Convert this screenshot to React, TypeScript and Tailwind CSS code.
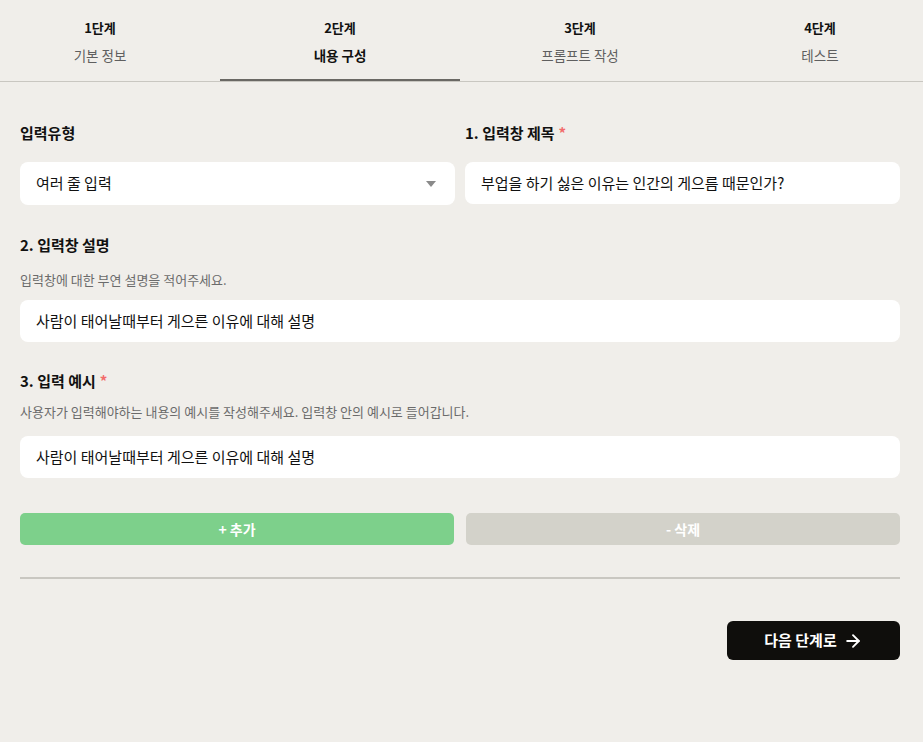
import React from "react";
import { ArrowRight } from "lucide-react";

const steps = [
  { num: "1단계", label: "기본 정보" },
  { num: "2단계", label: "내용 구성" },
  { num: "3단계", label: "프롬프트 작성" },
  { num: "4단계", label: "테스트" },
];

function Label({ text, required }: { text: string; required?: boolean }) {
  return (
    <div className="text-[15px] leading-5 font-semibold text-[#111]">
      {text}
      {required && <span className="ml-1 text-[#f26b6b]">*</span>}
    </div>
  );
}

function TextBox({ value }: { value: string }) {
  return (
    <div className="h-[42px] bg-white rounded-lg px-4 flex items-center text-[15px] text-[#111]">
      {value}
    </div>
  );
}

export default function App() {
  const active = 1;
  return (
    <div
      className="min-h-[742px] bg-[#f0eeea] overflow-hidden"
      style={{ fontFamily: '"Noto Sans CJK KR", "Noto Sans", sans-serif' }}
    >
      <div className="border-b border-[#c9c7c1] overflow-hidden">
        <div className="flex -ml-[20px] w-[960px]">
          {steps.map((s, i) => (
            <div key={s.num} className="w-[240px] h-[81px] relative flex flex-col items-center pt-[18px]">
              <div className="text-[13px] leading-5 font-bold text-[#111]">{s.num}</div>
              <div
                className={
                  i === active
                    ? "mt-[7px] text-[13.5px] leading-5 font-semibold text-[#111]"
                    : "mt-[7px] text-[13.5px] leading-5 text-[#5f5f5f]"
                }
              >
                {s.label}
              </div>
              {i === active && <div className="absolute left-0 right-0 bottom-0 h-[2px] bg-[#6a6864]" />}
            </div>
          ))}
        </div>
      </div>

      <div className="pl-5 pr-[23px] pt-[41px]">
        <div className="grid grid-cols-2 gap-[10px]">
          <div>
            <Label text="입력유형" />
            <div className="mt-[19px] h-[43px] bg-white rounded-lg pl-4 pr-4 flex items-center justify-between text-[15px] text-[#111]">
              <span>여러 줄 입력</span>
              <svg width="10" height="6" viewBox="0 0 10 6" className="mr-[3px]">
                <path d="M0 0 L10 0 L5 6 Z" fill="#8a8a8a" />
              </svg>
            </div>
          </div>
          <div>
            <Label text="1. 입력창 제목" required />
            <div className="mt-[19px]">
              <TextBox value="부업을 하기 싫은 이유는 인간의 게으름 때문인가?" />
            </div>
          </div>
        </div>

        <div className="mt-[30px]">
          <Label text="2. 입력창 설명" />
          <div className="mt-[17px] text-[13px] leading-4 text-[#6b6b6b]">입력창에 대한 부연 설명을 적어주세요.</div>
          <div className="mt-[12px]">
            <TextBox value="사람이 태어날때부터 게으른 이유에 대해 설명" />
          </div>
        </div>

        <div className="mt-[29px]">
          <Label text="3. 입력 예시" required />
          <div className="mt-[13px] text-[13px] leading-4 text-[#6b6b6b]">
            사용자가 입력해야하는 내용의 예시를 작성해주세요. 입력창 안의 예시로 들어갑니다.
          </div>
          <div className="mt-[16px]">
            <TextBox value="사람이 태어날때부터 게으른 이유에 대해 설명" />
          </div>
        </div>

        <div className="mt-[35px] grid grid-cols-2 gap-3">
          <button className="h-[32px] rounded-[5px] bg-[#7dd08b] text-white text-[14px] font-bold">+ 추가</button>
          <button className="h-[32px] rounded-[5px] bg-[#d3d2ca] text-white text-[14px] font-bold">- 삭제</button>
        </div>

        <div className="mt-[32px] h-[2px] bg-[#c9c7c1]" />

        <div className="mt-[42px] flex justify-end">
          <button className="w-[173px] h-[39px] rounded-md bg-[#0f0e0c] text-white text-[15px] font-bold flex items-center justify-center gap-[6px]">
            다음 단계로
            <ArrowRight className="w-5 h-5" strokeWidth={2.25} />
          </button>
        </div>
      </div>
    </div>
  );
}
